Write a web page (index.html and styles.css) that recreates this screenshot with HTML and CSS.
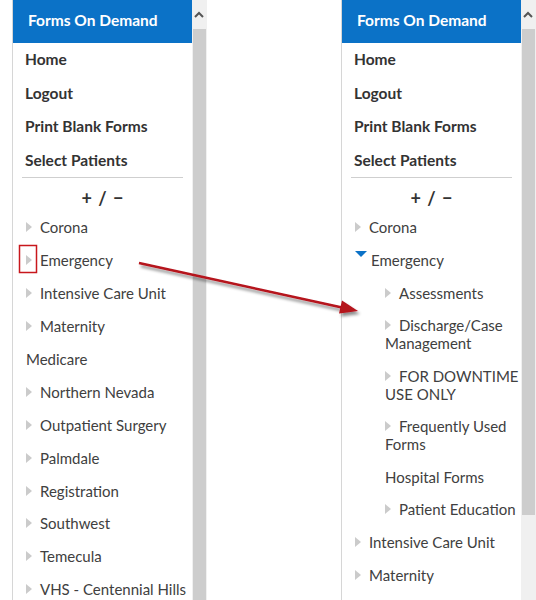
FILE: index.html
```html
<!DOCTYPE html>
<html>
<head>
<meta charset="utf-8">
<link rel="stylesheet" href="styles.css">
</head>
<body>
<div class="stage">
  <div class="panel">
    <div class="content">
      <div class="header">Forms On Demand</div>
      <div class="menu">
        <div class="menu-item">Home</div>
        <div class="menu-item">Logout</div>
        <div class="menu-item">Print Blank Forms</div>
        <div class="menu-item">Select Patients</div>
      </div>
      <div class="sep"></div>
      <div class="toggle">+ / −</div>
      <div class="tree">
        <div class="node"><span class="tri"></span>Corona</div>
        <div class="node"><span class="tri"></span>Emergency</div>
        <div class="node"><span class="tri"></span>Intensive Care Unit</div>
        <div class="node"><span class="tri"></span>Maternity</div>
        <div class="node">Medicare</div>
        <div class="node"><span class="tri"></span>Northern Nevada</div>
        <div class="node"><span class="tri"></span>Outpatient Surgery</div>
        <div class="node"><span class="tri"></span>Palmdale</div>
        <div class="node"><span class="tri"></span>Registration</div>
        <div class="node"><span class="tri"></span>Southwest</div>
        <div class="node"><span class="tri"></span>Temecula</div>
        <div class="node"><span class="tri"></span>VHS - Centennial Hills</div>
      </div>
    </div>
    <div class="scrollbar">
      <div class="sb-btn"><svg width="10" height="7" viewBox="0 0 10 7"><polyline points="1,6 5,2 9,6" fill="none" stroke="#555" stroke-width="2"/></svg></div>
      <div class="sb-track"><div class="sb-thumb full"></div></div>
    </div>
  </div>

  <div class="panel">
    <div class="content">
      <div class="header">Forms On Demand</div>
      <div class="menu">
        <div class="menu-item">Home</div>
        <div class="menu-item">Logout</div>
        <div class="menu-item">Print Blank Forms</div>
        <div class="menu-item">Select Patients</div>
      </div>
      <div class="sep"></div>
      <div class="toggle">+ / −</div>
      <div class="tree">
        <div class="node"><span class="tri"></span>Corona</div>
        <div class="node"><span class="tri-open"></span>Emergency</div>
        <div class="node sub"><span class="tri"></span>Assessments</div>
        <div class="node sub"><span class="tri"></span>Discharge/Case Management</div>
        <div class="node sub"><span class="tri"></span><span class="nowrap">FOR DOWNTIME</span> USE ONLY</div>
        <div class="node sub"><span class="tri"></span>Frequently Used Forms</div>
        <div class="node sub">Hospital Forms</div>
        <div class="node sub"><span class="tri"></span>Patient Education</div>
        <div class="node"><span class="tri"></span>Intensive Care Unit</div>
        <div class="node"><span class="tri"></span>Maternity</div>
      </div>
    </div>
    <div class="scrollbar">
      <div class="sb-btn"><svg width="10" height="7" viewBox="0 0 10 7"><polyline points="1,6 5,2 9,6" fill="none" stroke="#555" stroke-width="2"/></svg></div>
      <div class="sb-track"><div class="sb-thumb part"></div></div>
    </div>
  </div>

  <svg class="overlay" width="536" height="600" viewBox="0 0 536 600">
    <defs>
      <filter id="sh" x="-10%" y="-50%" width="120%" height="200%">
        <feDropShadow dx="2" dy="3" stdDeviation="1.5" flood-color="#000" flood-opacity="0.45"/>
      </filter>
    </defs>
    <rect x="19.5" y="245.5" width="17" height="27" fill="none" stroke="#c8171c" stroke-width="1.5"/>
    <g filter="url(#sh)">
      <line x1="139" y1="263" x2="342" y2="307.5" stroke="#b5121b" stroke-width="2.5"/>
      <polygon points="358,311 339,313.5 342,300.5" fill="#b5121b"/>
    </g>
  </svg>
</div>
</body>
</html>
```

FILE: styles.css
```css
html, body {
  margin: 0;
  padding: 0;
  background: #fff;
}

.stage {
  position: relative;
  width: 536px;
  height: 600px;
  overflow: hidden;
  display: flex;
  gap: 134px;
  padding-left: 12px;
  box-sizing: border-box;
  font-family: Lato, "Liberation Sans", sans-serif;
}

.panel {
  display: flex;
  height: 600px;
  border-left: 1px solid #d6d6d6;
}

.content {
  width: 179px;
  overflow: hidden;
}

.header {
  height: 43px;
  background: #0b72c7;
  color: #fff;
  font-weight: 700;
  font-size: 15.5px;
  line-height: 41px;
  padding-left: 15px;
  white-space: nowrap;
}

.menu-item {
  font-weight: 700;
  font-size: 15.5px;
  color: #333;
  line-height: 18px;
  padding: 7px 0 8.5px 12px;
  white-space: nowrap;
}

.sep {
  height: 1px;
  background: #cfcfcf;
  margin: 0 9px;
}

.toggle {
  text-align: center;
  font-weight: 700;
  font-size: 18px;
  color: #333;
  line-height: 20px;
  padding: 9.5px 0 3px;
  word-spacing: 2px;
}

.node {
  font-size: 15px;
  color: #404040;
  line-height: 18px;
  padding: 7.5px 3px 7.45px 13px;
}

.node.sub {
  padding-left: 43px;
  padding-right: 0;
  padding-top: 7.25px;
  padding-bottom: 7.25px;
}

.nowrap {
  white-space: nowrap;
}

.tri {
  display: inline-block;
  width: 0;
  height: 0;
  border-left: 6px solid #cbcbcb;
  border-top: 5px solid transparent;
  border-bottom: 5px solid transparent;
  margin-right: 8px;
  vertical-align: 1px;
}

.tri-open {
  display: inline-block;
  width: 0;
  height: 0;
  border-top: 6px solid #0b72c7;
  border-left: 6px solid transparent;
  border-right: 6px solid transparent;
  margin-right: 4px;
  vertical-align: 9px;
}

.scrollbar {
  width: 15px;
  display: flex;
  flex-direction: column;
  background: #f0f0f0;
}

.sb-btn {
  height: 29px;
  display: flex;
  justify-content: center;
  align-items: center;
  padding-right: 1px;
}

.sb-track {
  flex: 1;
  display: flex;
  flex-direction: column;
}

.sb-thumb {
  background: #cdcdcd;
  margin: 0 1px 0 1px;
}

.sb-thumb.full {
  flex: 1;
}

.sb-thumb.part {
  height: 486px;
}

.overlay {
  position: absolute;
  top: 0;
  left: 0;
  pointer-events: none;
}
```
